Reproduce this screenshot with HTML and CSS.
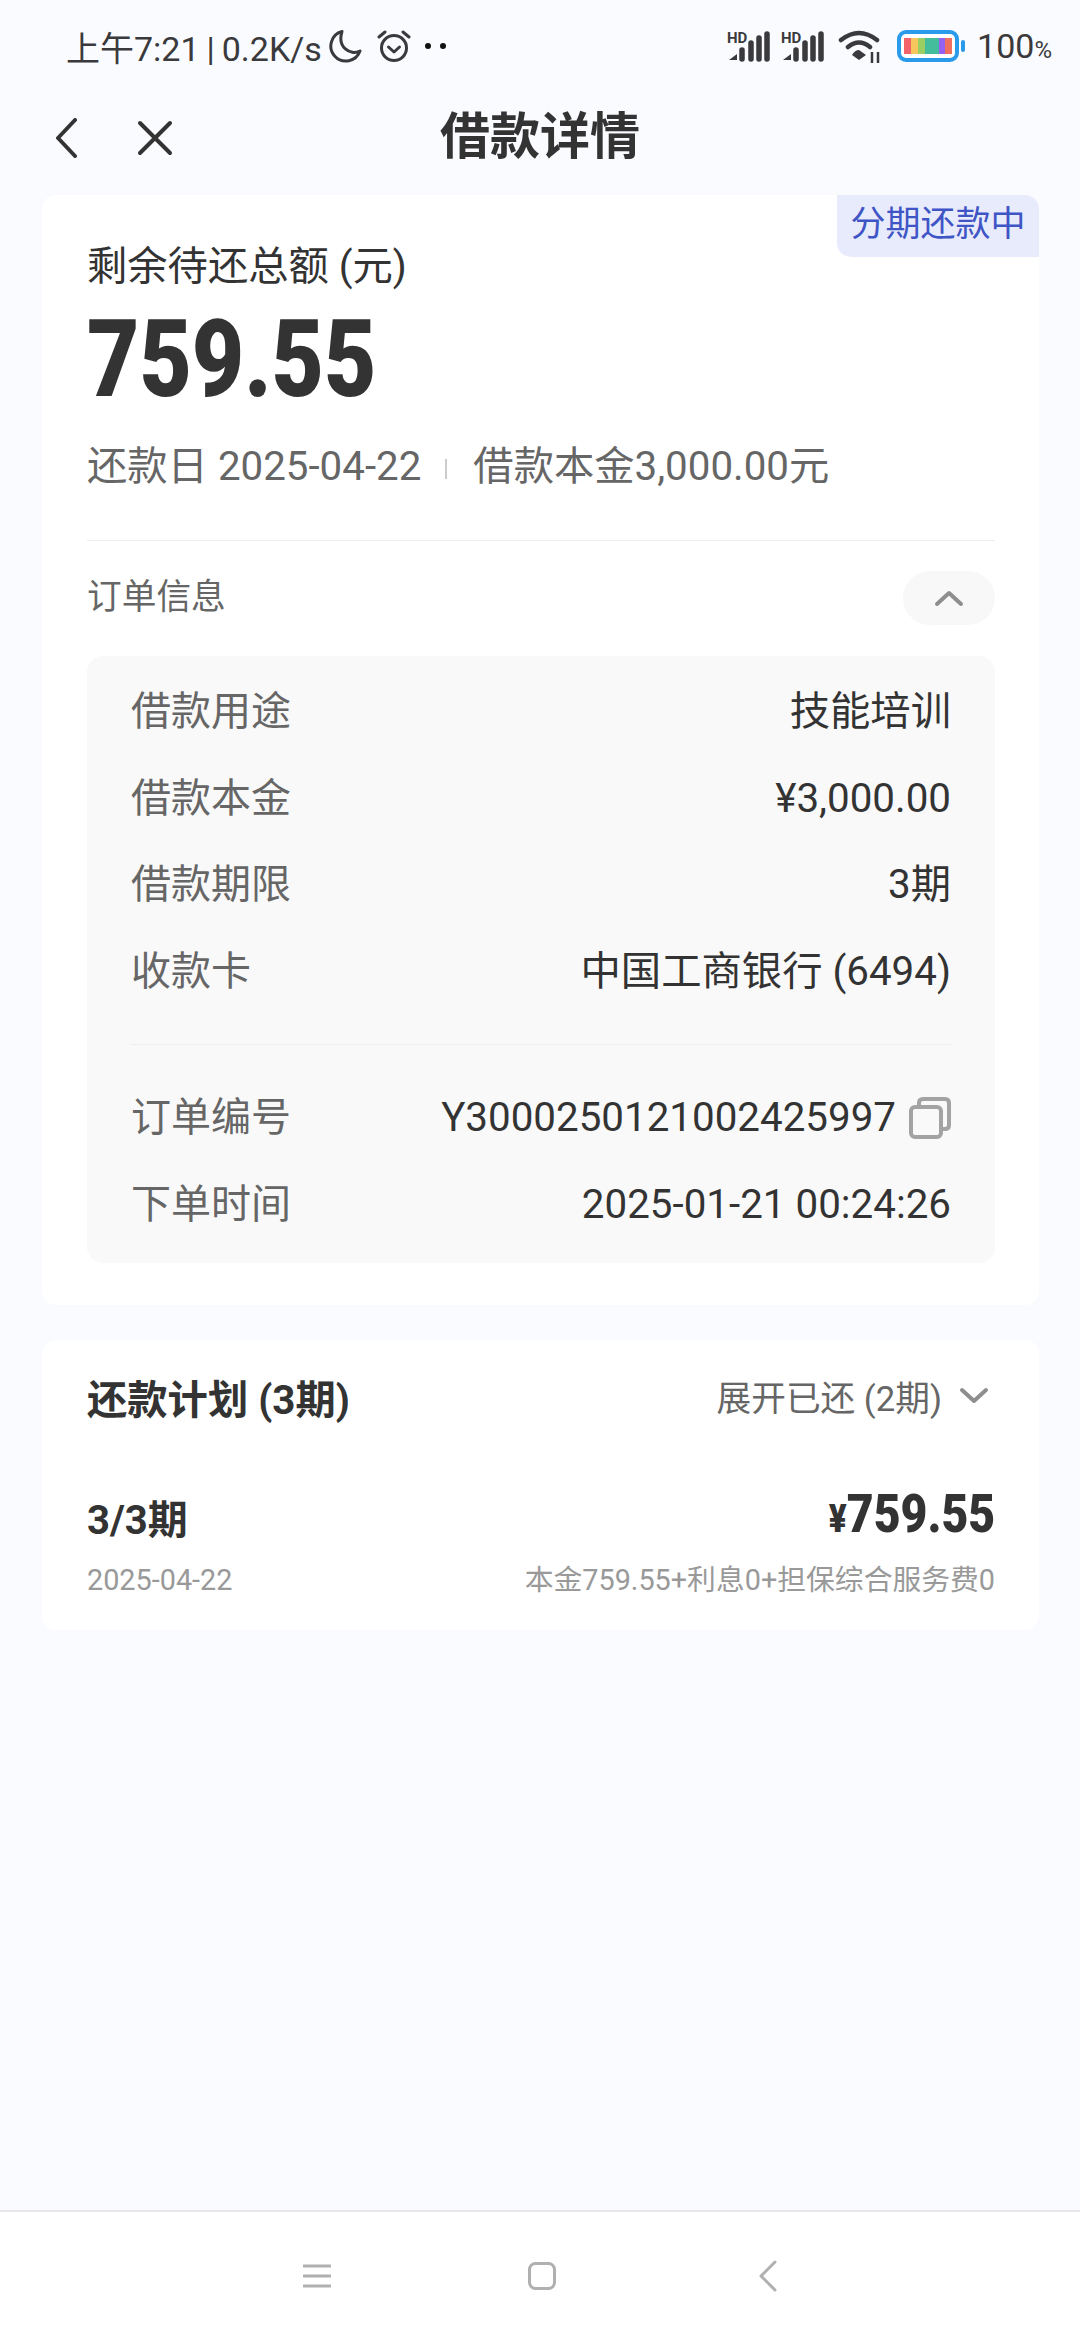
FILE: index.html
```html
<!DOCTYPE html>
<html lang="zh-CN">
<head>
  <meta charset="UTF-8">
  <meta name="viewport" content="width=device-width, initial-scale=1.0">
  <title>借款详情</title>
  <link rel="stylesheet" href="styles.css">
</head>
<body>
  <div class="status-bar">
    <div class="status-left">
      <span class="status-time">上午7:21 | 0.2K/s</span>
      <svg class="icon-moon" width="34" height="34" viewBox="0 0 34 34"><path d="M14 2.5A15 15 0 1 0 32 22 C22 27 9 18 14 2.5Z" fill="none" stroke="#3a3a3c" stroke-width="3" stroke-linejoin="round"/></svg>
      <svg class="icon-alarm" width="34" height="34" viewBox="0 0 34 34"><g fill="none" stroke="#3a3a3c" stroke-width="3" stroke-linecap="round" stroke-linejoin="round"><circle cx="17" cy="19" r="12.5"/><path d="M11.5 18l5.5 5 5.500-5"/><path d="M2 8l6-5M32 8l-6-5"/></g></svg>
      <span class="status-dots"><i></i><i></i></span>
    </div>
    <div class="status-right">
      <svg class="icon-signal" width="44" height="34" viewBox="0 0 44 34"><text x="0" y="14" class="hd-text">HD</text><path d="M2 31l8-6v6z" fill="#3a3a3c"/><path d="M15 21v9M24 14v16M32 9v21M40 5v25" fill="none" stroke="#3a3a3c" stroke-width="5.500" stroke-linecap="round"/></svg>
      <svg class="icon-signal" width="44" height="34" viewBox="0 0 44 34"><text x="0" y="14" class="hd-text">HD</text><path d="M2 31l8-6v6z" fill="#3a3a3c"/><path d="M15 21v9M24 14v16M32 9v21M40 5v25" fill="none" stroke="#3a3a3c" stroke-width="5.500" stroke-linecap="round"/></svg>
      <svg class="icon-wifi" width="44" height="34" viewBox="0 0 44 34"><path d="M3 11Q21 -3 39 11M10 18Q21 9 32 18" fill="none" stroke="#3a3a3c" stroke-width="4.500" stroke-linecap="round"/><path d="M21 21l7 5-7 5-7-5q3-5 7-5z" fill="#3a3a3c"/><path d="M34 23v11M40 23v11" stroke="#3a3a3c" stroke-width="2.500"/></svg>
      <svg class="icon-battery" width="70" height="32" viewBox="0 0 70 32">
        <rect x="2" y="2" width="58" height="28" rx="7" fill="#fff" stroke="#2a9bea" stroke-width="4"/>
        <rect x="7" y="8" width="7" height="16" fill="#f2636a"/>
        <rect x="14" y="8" width="7" height="16" fill="#f7c75e"/>
        <rect x="21" y="8" width="7" height="16" fill="#9ccf63"/>
        <rect x="28" y="8" width="14" height="16" fill="#43bd9b"/>
        <rect x="42" y="8" width="6" height="16" fill="#9461f2"/>
        <rect x="48" y="8" width="7" height="16" fill="#f0705f"/>
        <rect x="64" y="10" width="4" height="12" rx="2" fill="#2a9bea"/>
      </svg>
      <span class="status-battery">100<small>%</small></span>
    </div>
  </div>

  <div class="nav-bar">
    <svg class="nav-back" width="24" height="40" viewBox="0 0 24 40"><path d="M20 2L3 20l17 18" fill="none" stroke="#333" stroke-width="4" stroke-linecap="round" stroke-linejoin="round"/></svg>
    <svg class="nav-close" width="36" height="36" viewBox="0 0 36 36"><path d="M3 3l30 30M33 3L3 33" fill="none" stroke="#333" stroke-width="4" stroke-linecap="round"/></svg>
    <h1 class="nav-title">借款详情</h1>
  </div>

  <main class="content">
    <section class="card summary-card">
      <div class="status-badge">分期还款中</div>
      <div class="summary-label">剩余待还总额 (元)</div>
      <div class="summary-amount">759.55</div>
      <div class="summary-meta">
        <span>还款日 2025-04-22</span>
        <i class="meta-sep"></i>
        <span>借款本金3,000.00元</span>
      </div>
      <div class="order-head">
        <span class="order-title">订单信息</span>
        <div class="collapse-btn">
          <svg width="30" height="18" viewBox="0 0 30 18"><path d="M3 15L15 4l12 11" fill="none" stroke="#8e8e8e" stroke-width="4" stroke-linecap="round" stroke-linejoin="round"/></svg>
        </div>
      </div>
      <div class="order-panel">
        <div class="order-group">
          <div class="order-row"><span class="order-key">借款用途</span><span class="order-val">技能培训</span></div>
          <div class="order-row"><span class="order-key">借款本金</span><span class="order-val">¥3,000.00</span></div>
          <div class="order-row"><span class="order-key">借款期限</span><span class="order-val">3期</span></div>
          <div class="order-row"><span class="order-key">收款卡</span><span class="order-val">中国工商银行 (6494)</span></div>
        </div>
        <div class="order-group order-group-last">
          <div class="order-row">
            <span class="order-key">订单编号</span>
            <span class="order-val order-copy">Y3000250121002425997
              <svg width="42" height="42" viewBox="0 0 42 42"><g fill="none" stroke="#a3a3a3" stroke-width="4" stroke-linejoin="round"><rect x="2" y="10" width="30" height="30" rx="4"/><path d="M10 9V6q0-4 4-4h22q4 0 4 4v22q0 4-4 4h-3"/></g></svg>
            </span>
          </div>
          <div class="order-row"><span class="order-key">下单时间</span><span class="order-val">2025-01-21 00:24:26</span></div>
        </div>
      </div>
    </section>

    <section class="card plan-card">
      <div class="plan-head">
        <h2 class="plan-title">还款计划 (3期)</h2>
        <div class="plan-toggle">
          <span>展开已还 (2期)</span>
          <svg width="30" height="18" viewBox="0 0 30 18"><path d="M3 3l12 11L27 3" fill="none" stroke="#8e8e8e" stroke-width="4" stroke-linecap="round" stroke-linejoin="round"/></svg>
        </div>
      </div>
      <div class="plan-row plan-row-main">
        <span class="plan-period">3/3期</span>
        <span class="plan-amount"><small>¥</small>759.55</span>
      </div>
      <div class="plan-row plan-row-sub">
        <span>2025-04-22</span>
        <span>本金759.55+利息0+担保综合服务费0</span>
      </div>
    </section>
  </main>

  <div class="bottom-nav">
    <svg width="28" height="24" viewBox="0 0 28 24"><path d="M1 2h26M1 12h26M1 22h26" fill="none" stroke="#b0b0b0" stroke-width="3" stroke-linecap="round"/></svg>
    <svg class="nav-home" width="28" height="28" viewBox="0 0 28 28"><rect x="1.500" y="1.500" width="25" height="25" rx="6" fill="none" stroke="#b0b0b0" stroke-width="3"/></svg>
    <svg class="nav-return" width="18" height="32" viewBox="0 0 18 32"><path d="M16 2L2 16l14 14" fill="none" stroke="#b0b0b0" stroke-width="3" stroke-linecap="round" stroke-linejoin="round"/></svg>
  </div>
</body>
</html>
```

FILE: styles.css
```css
* {
  box-sizing: border-box;
}

body {
  margin: 0;
  height: 2340px;
  display: flex;
  flex-direction: column;
  background-color: #fafbff;
  color: #333;
  font-family: Roboto, "Noto Sans CJK SC", sans-serif;
}

/* status bar */
.status-bar {
  height: 92px;
  padding: 0 28px 0 66px;
  display: flex;
  justify-content: space-between;
  align-items: center;
  color: #3a3a3c;
}

.status-left,
.status-right {
  display: flex;
  align-items: center;
}

.status-time {
  font-size: 34px;
  word-spacing: -1.500px;
  white-space: nowrap;
}

.icon-moon {
  margin-left: 6px;
}

.icon-alarm {
  margin-left: 15px;
}

.status-dots {
  margin-left: 14px;
  display: flex;
  gap: 9px;
}

.status-dots i {
  width: 6px;
  height: 6px;
  border-radius: 50%;
  background-color: #111;
}

.hd-text {
  font-family: Roboto, sans-serif;
  font-size: 15px;
  font-weight: 700;
  fill: #3a3a3c;
}

.icon-signal {
  overflow: visible;
}

.icon-signal + .icon-signal {
  margin-left: 10px;
}

.icon-wifi {
  margin-left: 13px;
}

.icon-battery {
  margin-left: 15px;
}

.status-battery {
  margin-left: 10px;
  font-size: 34px;
}

.status-battery small {
  font-size: 24px;
}

/* nav */
.nav-bar {
  position: relative;
  height: 103px;
  display: flex;
  align-items: center;
  padding-left: 55px;
  padding-bottom: 12px;
}

.nav-close {
  margin-left: 58px;
}

.nav-title {
  position: absolute;
  left: 0;
  right: 0;
  top: 15px;
  margin: 0;
  text-align: center;
  font-size: 50px;
  line-height: 60px;
  font-weight: 700;
}

/* cards */
.content {
  flex: 1;
  padding: 0 41px 0 42px;
}

.card {
  position: relative;
  background-color: #fff;
  border-radius: 14px;
  padding: 0 44px 0 45px;
}

.summary-card {
  height: 1110px;
  padding-top: 45px;
}

.status-badge {
  position: absolute;
  top: 0;
  right: 0;
  width: 202px;
  height: 62px;
  border-radius: 0 14px 0 14px;
  background-color: #e8ebfb;
  color: #3f55c6;
  font-size: 35px;
  line-height: 60px;
  text-align: center;
}

.summary-label {
  font-size: 40.300px;
  line-height: 54px;
}

.summary-amount {
  margin-top: 6px;
  font-size: 107px;
  line-height: 120px;
  font-weight: 900;
  transform: scaleX(0.845);
  transform-origin: left center;
}

.summary-meta {
  margin-top: 20px;
  display: flex;
  align-items: center;
  font-size: 40.300px;
  line-height: 54px;
  color: #666;
}

.meta-sep {
  width: 2px;
  height: 20px;
  margin: 4px 26px 0 24px;
  background-color: #ccc;
}

.order-head {
  margin-top: 46px;
  height: 90px;
  padding-top: 24px;
  display: flex;
  justify-content: space-between;
  align-items: center;
  border-top: 1px solid #eee;
  font-size: 34.700px;
  color: #666;
}

.order-title {
  padding-bottom: 8px;
}

.collapse-btn {
  width: 92px;
  height: 54px;
  display: flex;
  justify-content: center;
  align-items: center;
  border-radius: 27px;
  background-color: #f8f8f8;
}

.order-panel {
  margin-top: 26px;
  padding: 13px 44px 16px 44px;
  height: 607px;
  border-radius: 16px;
  background-color: #f9f9f9;
}

.order-group {
  padding-bottom: 29px;
  border-bottom: 1px solid #eee;
}

.order-group-last {
  padding: 30px 0 0;
  border-bottom: none;
}

.order-row {
  height: 86.500px;
  display: flex;
  justify-content: space-between;
  align-items: baseline;
  font-size: 40.350px;
  line-height: 86.500px;
}

.order-key {
  color: #666;
  font-size: 40px;
}

.order-val {
  color: #333;
}

.order-copy {
  display: flex;
  align-items: center;
  gap: 13px;
}

.plan-card {
  height: 290px;
  margin-top: 35px;
}

.plan-head {
  height: 112px;
  display: flex;
  justify-content: space-between;
  align-items: center;
}

.plan-title {
  margin: 0;
  font-size: 40.300px;
  font-weight: 700;
}

.plan-toggle {
  display: flex;
  align-items: center;
  gap: 17px;
  margin-right: 6px;
  font-size: 34.700px;
  color: #666;
}

.plan-row {
  display: flex;
  justify-content: space-between;
  align-items: center;
}

.plan-row-main {
  margin-top: 29px;
}

.plan-period {
  font-size: 40px;
  font-weight: 700;
}

.plan-amount {
  font-size: 53px;
  line-height: 66px;
  font-weight: 900;
  transform: scaleX(0.875);
  transform-origin: right center;
}

.plan-amount small {
  font-size: 38px;
}

.plan-row-sub {
  margin-top: 5px;
  font-size: 28.800px;
  color: #999;
  align-items: baseline;
}

/* bottom nav */
.bottom-nav {
  height: 130px;
  padding: 0 0 0 303px;
  display: flex;
  align-items: center;
  border-top: 2px solid #e8e8e8;
  background-color: #fff;
}

.nav-home {
  margin-left: 197px;
}

.nav-return {
  margin-left: 203px;
}
```
